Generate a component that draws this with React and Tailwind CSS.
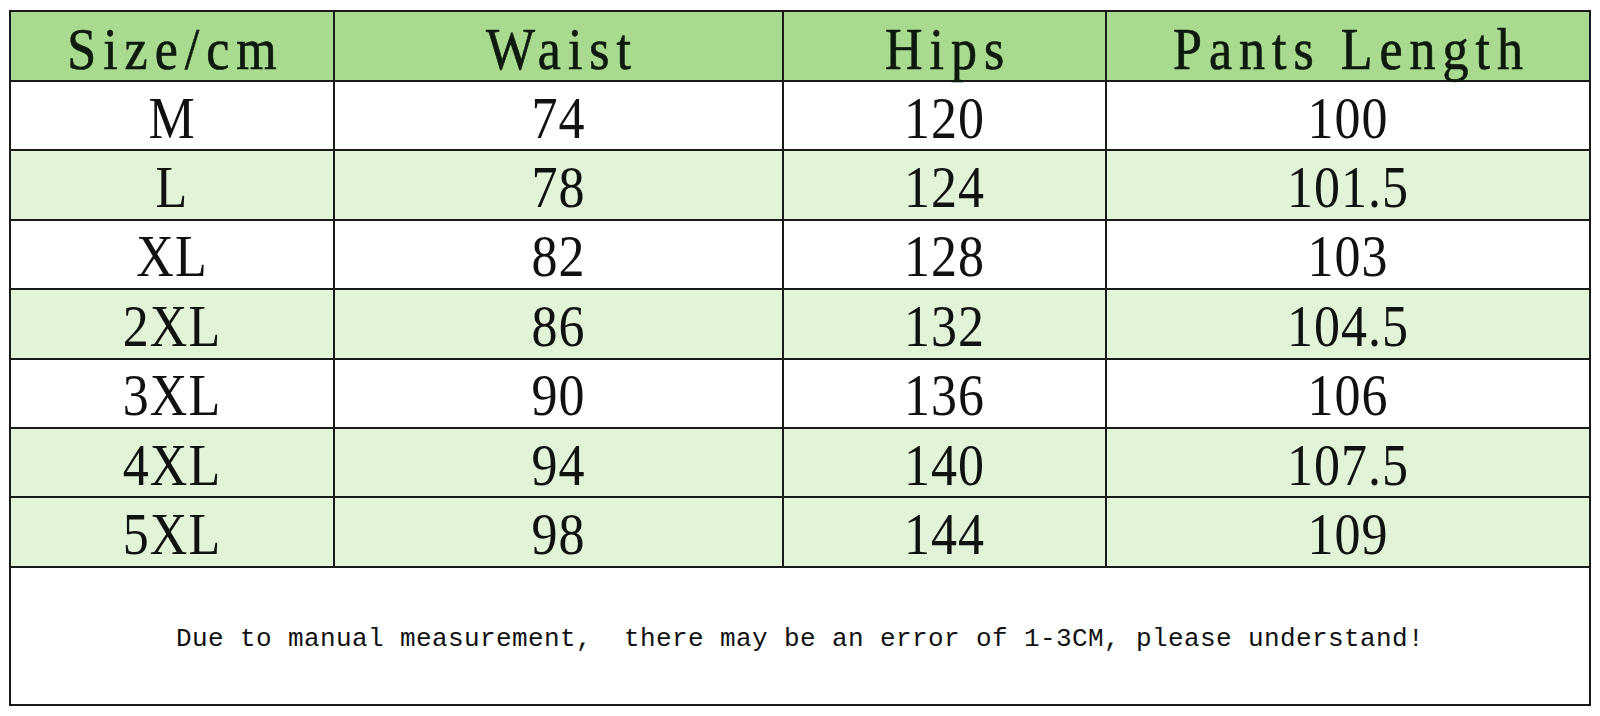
import React from 'react'

const rows = [
  { size: 'M', waist: '74', hips: '120', length: '100', green: false },
  { size: 'L', waist: '78', hips: '124', length: '101.5', green: true },
  { size: 'XL', waist: '82', hips: '128', length: '103', green: false },
  { size: '2XL', waist: '86', hips: '132', length: '104.5', green: true },
  { size: '3XL', waist: '90', hips: '136', length: '106', green: false },
  { size: '4XL', waist: '94', hips: '140', length: '107.5', green: true },
  { size: '5XL', waist: '98', hips: '144', length: '109', green: true },
]

const headers = ['Size/cm', 'Waist', 'Hips', 'Pants Length']

function Cell({ children }) {
  return (
    <td className="border-2 border-[#1a1a1a] p-0 text-center align-middle">
      <span className="inline-block translate-y-[3px] scale-y-[1.14] font-['Liberation_Serif',serif] text-[52px] leading-none tracking-[1px] text-[#111]">
        {children}
      </span>
    </td>
  )
}

export default function App() {
  return (
    <div className="min-h-screen w-[1600px] bg-white pl-[9px] pt-[10px]">
      {/* size chart */}
      <table className="w-[1580px] table-fixed border-collapse border-2 border-[#1a1a1a]">
        <colgroup>
          <col className="w-[324px]" />
          <col className="w-[449px]" />
          <col className="w-[323px]" />
          <col className="w-[484px]" />
        </colgroup>
        <thead>
          <tr className="h-[70px] bg-[#a8da90]">
            {headers.map((h) => (
              <th key={h} className="border-2 border-[#1a1a1a] p-0 text-center align-middle font-normal">
                <span className="inline-block translate-y-[4px] scale-y-[1.12] whitespace-pre pl-[7px] font-['Liberation_Serif',serif] text-[52px] leading-none tracking-[7px] text-[#0d1a0d] [-webkit-text-stroke:0.6px_#0d1a0d]">
                  {h}
                </span>
              </th>
            ))}
          </tr>
        </thead>
        <tbody>
          {rows.map((r) => (
            <tr key={r.size} className={r.green ? 'h-[69.4px] bg-[#e2f4d8]' : 'h-[69.4px] bg-white'}>
              <Cell>{r.size}</Cell>
              <Cell>{r.waist}</Cell>
              <Cell>{r.hips}</Cell>
              <Cell>{r.length}</Cell>
            </tr>
          ))}
          <tr className="h-[138px] bg-white">
            <td colSpan={4} className="border-2 border-[#1a1a1a] p-0 pt-2 text-center align-middle">
              <span className="whitespace-pre font-['Liberation_Mono',monospace] text-[26px] tracking-[0.4px] text-[#111]">
                Due to manual measurement,  there may be an error of 1-3CM, please understand!
              </span>
            </td>
          </tr>
        </tbody>
      </table>
    </div>
  )
}
